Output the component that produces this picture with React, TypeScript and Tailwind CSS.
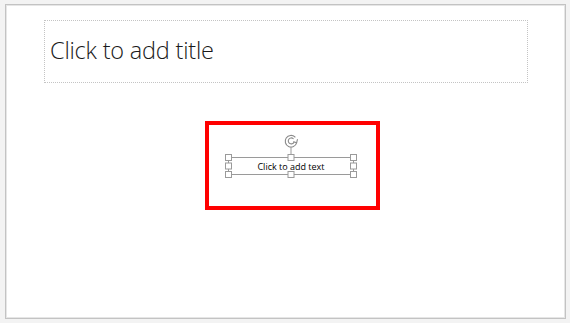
import React from "react";

const Handle = ({ x, y }: { x: number; y: number }) => (
  <rect x={x - 3} y={y - 3} width={6} height={6} fill="#ffffff" stroke="#9a9a9a" strokeWidth={1} />
);

export default function App() {
  // text box geometry, relative to the selection svg
  const L = 19, R = 144, T = 32, B = 49, M = (L + R) / 2, C = (T + B) / 2;
  const cx = M + 0.5, cy = 16;
  return (
    <div className="w-[570px] h-[323px] bg-[#f3f3f3] pl-[5px] pt-[4px] overflow-hidden">
      <div className="relative w-[561px] h-[315px] bg-white border border-[#c3c3c3] shadow-[inset_0_0_0_1px_#e6e6e6]">
        {/* title placeholder */}
        <div className="ml-[38px] mt-[15px] w-[484px] h-[63px] border border-dotted border-[#c4c4c4] flex items-center pl-[5px] pb-[2px]">
          <span className="text-[23.5px] text-[#1a1a1a] font-light tracking-[-0.2px] font-['Open_Sans',sans-serif]">
            Click to add title
          </span>
        </div>

        {/* highlighted text box */}
        <div className="absolute left-[199px] top-[116px] w-[175px] h-[89px] border-[4px] border-[#ff0000]">
          <svg className="absolute left-0 top-0" width={167} height={81} viewBox="0 0 167 81">
            <rect x={L + 0.5} y={T + 0.5} width={R - L} height={B - T} fill="none" stroke="#9a9a9a" strokeWidth={1} />
            <line x1={M + 0.5} y1={22} x2={M + 0.5} y2={T} stroke="#9a9a9a" strokeWidth={1} />
            {/* rotation handle */}
            <g fill="none" stroke="#8a8a8a" strokeWidth={1.1} strokeLinecap="round">
              <path d={`M${cx + 4} ${cy - 4} A5.8 5.8 0 1 0 ${cx + 5.6} ${cy + 1.8}`} />
              <path d={`M${cx + 5.6} ${cy + 1.8} L${cx + 2.6} ${cy + 0.8} M${cx + 5.6} ${cy + 1.8} L${cx + 6.4} ${cy - 1.4}`} />
              <path d={`M${cx + 2.2} ${cy - 2.4} A3 3 0 1 0 ${cx + 3} ${cy + 1.2}`} />
            </g>
            {[
              [L, T], [M, T], [R, T],
              [L, C], [R, C],
              [L, B], [M, B], [R, B],
            ].map(([x, y], i) => (
              <Handle key={i} x={x + 0.5} y={y + 0.5} />
            ))}
          </svg>
          <div className="absolute left-[19px] top-[32px] w-[126px] h-[18px] flex items-center justify-center">
            <span className="text-[9px] leading-none text-[#000] font-medium font-['Open_Sans',sans-serif]">Click to add text</span>
          </div>
        </div>
      </div>
    </div>
  );
}
